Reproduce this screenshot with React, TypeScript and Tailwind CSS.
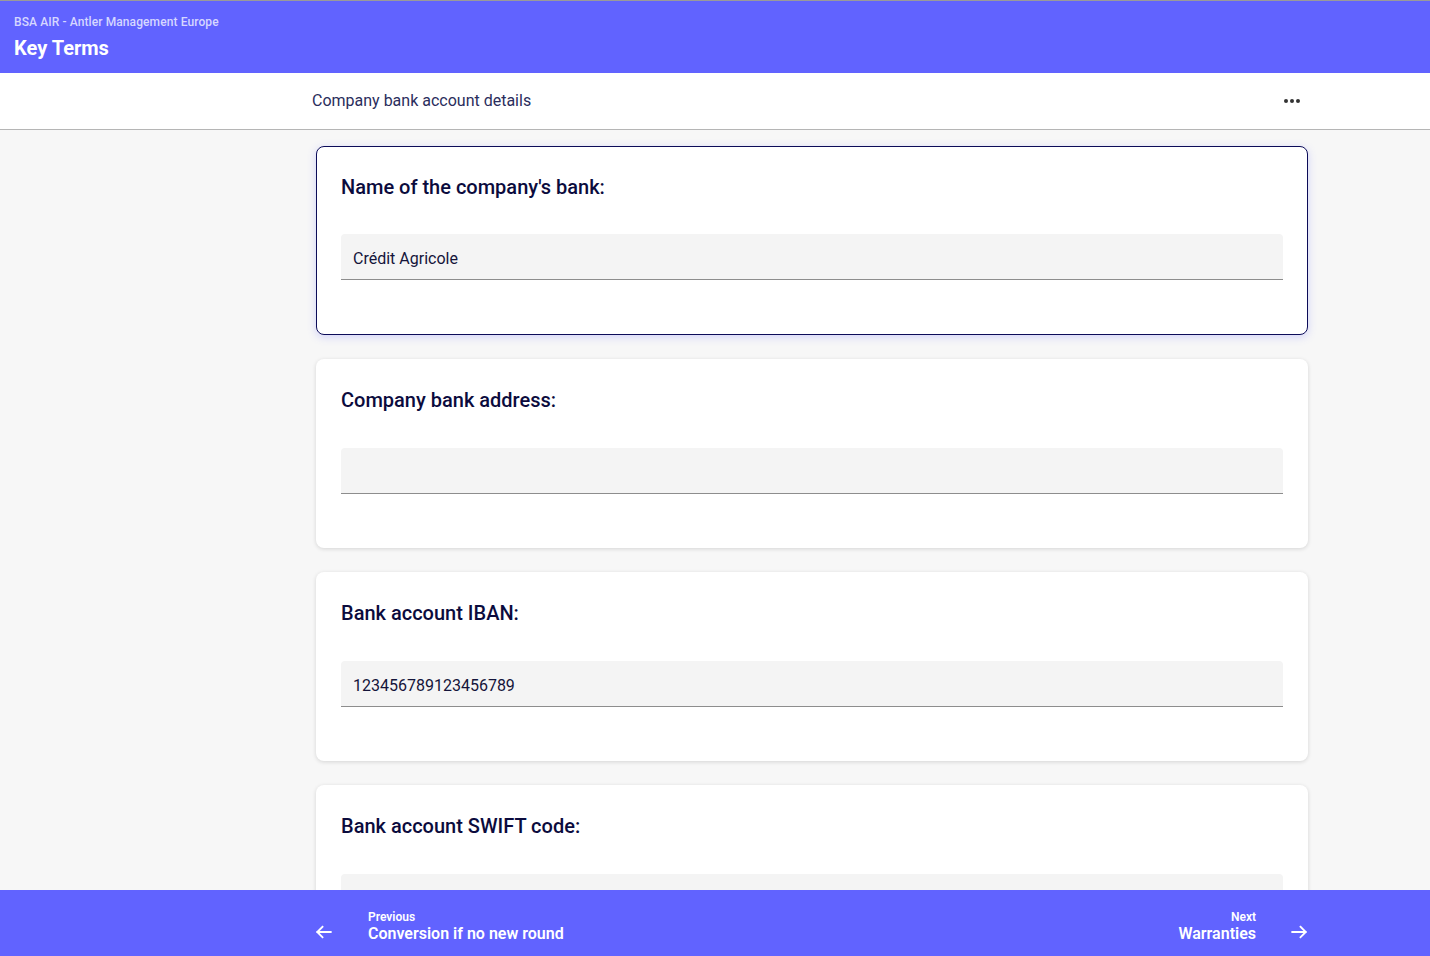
import React from "react";

const Field = ({ label, value, active }: { label: string; value: string; active?: boolean }) => (
  <div
    className={
      "bg-white rounded-lg px-[24px] pt-[27px] " +
      (active
        ? "pb-[54px] border border-[#0c0c58] shadow-[0_2px_8px_rgba(97,100,255,0.25)]"
        : "pb-[53px] border border-transparent shadow-[0_1px_4px_rgba(0,0,0,0.14)]")
    }
  >
    <div className="text-[20px] leading-[26px] font-medium text-[#0b0b3d]">{label}</div>
    <div
      className={
        (active ? "mt-[34px]" : "mt-[35px]") +
        " h-[46px] bg-[#f4f4f4] rounded-t border-b border-[#8d8d8d] flex items-center px-3 pt-[4px] text-[16px] text-[#14143a]"
      }
    >
      {value}
    </div>
  </div>
);

export default function App() {
  return (
    <div className="h-screen flex flex-col overflow-hidden bg-[#f7f7f7] font-['Roboto',sans-serif]">
      <header className="h-[73px] shrink-0 bg-[#6163ff] border-t border-[#9a9a9a] px-[14px] pt-[14px]">
        <div className="text-[12px] leading-[14px] font-medium tracking-[0.1px] text-[#d6d7ff]">BSA AIR - Antler Management Europe</div>
        <div className="mt-[7px] text-[20px] leading-[24px] font-bold text-white">Key Terms</div>
      </header>
      <div className="h-[57px] shrink-0 bg-white border-b border-[#b5b5b5] flex items-center">
        <div className="w-[992px] ml-[312px] flex items-center justify-between pr-[4px]">
          <span className="text-[16px] text-[#2a2d5c]">Company bank account details</span>
          <span className="flex gap-[2px]">
            <span className="w-[4px] h-[4px] rounded-full bg-[#333]" />
            <span className="w-[4px] h-[4px] rounded-full bg-[#333]" />
            <span className="w-[4px] h-[4px] rounded-full bg-[#333]" />
          </span>
        </div>
      </div>
      <main className="flex-1 overflow-hidden">
        <div className="w-[992px] ml-[316px] pt-[16px] flex flex-col gap-[24px]">
          <Field label="Name of the company's bank:" value="Crédit Agricole" active />
          <Field label="Company bank address:" value="" />
          <Field label="Bank account IBAN:" value="123456789123456789" />
          <Field label="Bank account SWIFT code:" value="" />
        </div>
      </main>
      <footer className="h-[66px] shrink-0 bg-[#6163ff] flex items-center pt-[7px]">
        <div className="w-[992px] ml-[316px] flex items-center justify-between text-white">
          <div className="flex items-center">
            <svg width="18" height="18" viewBox="0 0 24 24" fill="none" stroke="white" strokeWidth="2.4" strokeLinecap="square" className="mt-[10px] -ml-[1px]">
              <path d="M21 12H3M10 5l-7 7 7 7" />
            </svg>
            <div className="ml-[35px] flex flex-col">
              <span className="text-[12px] leading-[14px] font-semibold">Previous</span>
              <span className="text-[16px] leading-[20px] font-semibold">Conversion if no new round</span>
            </div>
          </div>
          <div className="flex items-center">
            <div className="flex flex-col items-end">
              <span className="text-[12px] leading-[14px] font-semibold">Next</span>
              <span className="text-[16px] leading-[20px] font-semibold">Warranties</span>
            </div>
            <svg width="18" height="18" viewBox="0 0 24 24" fill="none" stroke="white" strokeWidth="2.4" strokeLinecap="square" className="ml-[34px] mt-[10px]">
              <path d="M3 12h18M14 5l7 7-7 7" />
            </svg>
          </div>
        </div>
      </footer>
    </div>
  );
}
